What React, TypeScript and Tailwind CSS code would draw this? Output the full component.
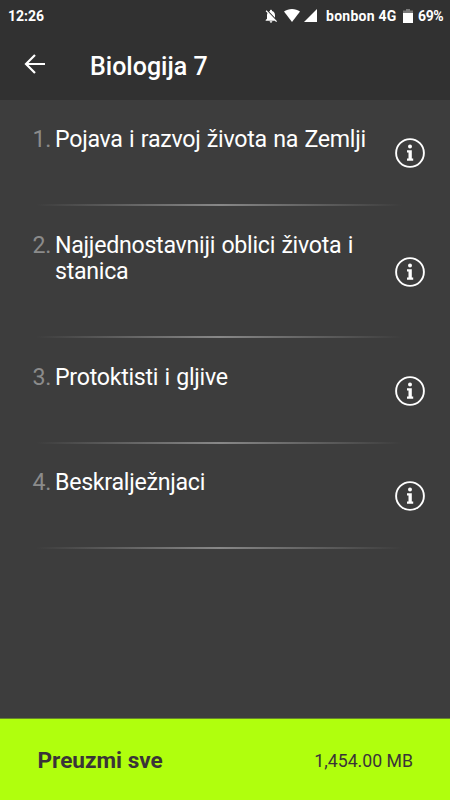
const chapters = [
  "Pojava i razvoj života na Zemlji",
  "Najjednostavniji oblici života i stanica",
  "Protoktisti i gljive",
  "Beskralježnjaci",
];

function StatusBar() {
  return (
    <div className="flex h-8 items-center justify-between pl-2 pr-[8px] text-[14px] font-bold leading-4 text-white">
      <span className="w-[36px] whitespace-nowrap">12:26</span>
      <div className="flex items-center whitespace-nowrap">
        <svg viewBox="0 0 24 24" className="mr-[5px] mt-[-1px] size-[16px]" fill="currentColor">
          <path d="M20 18.69L7.84 6.14 5.27 3.49 4 4.76l2.8 2.8v.01c-.52.99-.8 2.16-.8 3.42v5l-2 2v1h13.73l2 2L21 19.72l-1-1.03zM12 22c1.11 0 2-.89 2-2h-4c0 1.11.89 2 2 2zm6-7.32V11c0-3.08-1.64-5.64-4.5-6.32V4c0-.83-.67-1.5-1.5-1.5s-1.5.67-1.5 1.5v.68c-.15.03-.29.08-.42.12-.1.03-.2.07-.3.11h-.01c-.01 0-.01 0-.02.01-.23.09-.46.2-.68.31 0 0-.01 0-.01.01L18 14.68z" />
        </svg>
        <svg viewBox="0 0 16 13" className="mr-1 mt-[-2px] h-[13px] w-4" fill="currentColor">
          <path d="M0 2.6C4.4-.8 11.6-.8 16 2.6L8 13z" />
        </svg>
        <svg viewBox="0 0 13 13" className="mr-[9px] mt-[-1px] size-[13px]" fill="currentColor">
          <path d="M13 0v13H0z" />
        </svg>
        <span className="w-[71px] tracking-[0.25px]">bonbon 4G</span>
        <svg viewBox="0 0 10 14" className="ml-[6px] mr-[5px] mt-[-1px] h-[14px] w-[10px]" fill="currentColor">
          <path d="M3 0h4v1.5h3V4H0V1.5h3z" opacity=".35" />
          <path d="M0 4h10v10H0z" />
        </svg>
        <span className="w-[24px] tracking-[-0.4px]">69%</span>
      </div>
    </div>
  );
}

function InfoIcon() {
  return (
    <svg viewBox="0 0 30 30" className="mt-[1px] size-[30px] shrink-0 text-white" fill="currentColor">
      <circle cx="15" cy="15" r="13.9" fill="none" stroke="currentColor" strokeWidth="1.9" />
      <circle cx="15" cy="8.6" r="2" />
      <path d="M12 12.2h4.8v8.4h1.4v2.2h-6.2v-2.2h1.5v-6.2h-1.5z" />
    </svg>
  );
}

function ChapterRow({ index, title }: { index: number; title: string }) {
  return (
    <li>
      <div className="flex items-center justify-between pl-[32.5px] pr-[25px]">
        <div className="flex pb-[51.6px] pt-[25.6px] text-[23.2px] leading-[26.4px] tracking-[-0.28px]">
          <span className="w-[22.5px] shrink-0 text-[#8b8b8b]">{index}.</span>
          <span className="w-[325px] text-white [word-spacing:0.9px]">{title}</span>
        </div>
        <InfoIcon />
      </div>
      <div className="ml-[36px] mr-[48px] h-[2px] bg-linear-to-r from-transparent via-[#888888] to-transparent" />
    </li>
  );
}

export default function App() {
  return (
    <div className="flex h-[800px] w-[450px] flex-col overflow-hidden bg-[#3d3d3d] font-['Roboto',sans-serif]">
      <header className="h-[100px] shrink-0 bg-[#313131]">
        <StatusBar />
        <div className="flex h-[68px] items-center pl-[24px] text-white">
          <svg viewBox="0 0 21 20" className="mb-[4px] h-5 w-[21px]" fill="none" stroke="currentColor" strokeWidth="2.2">
            <path d="M21 10H2M11 1l-9 9 9 9" />
          </svg>
          <h1 className="ml-[45px] mt-[2px] text-[25px] font-medium leading-8">Biologija 7</h1>
        </div>
      </header>
      <ul className="grow pt-[0.7px]">
        {chapters.map((title, i) => (
          <ChapterRow key={title} index={i + 1} title={title} />
        ))}
      </ul>
      <button className="flex h-[82px] shrink-0 items-center justify-between border-t border-[#66862b] bg-[#b0ff0d] pl-[37.5px] pr-[37px] pt-[2px] text-[#3a3438]">
        <span className="text-[22.6px] font-bold">Preuzmi sve</span>
        <span className="pt-[1px] text-[17.7px]">1,454.00 MB</span>
      </button>
    </div>
  );
}
